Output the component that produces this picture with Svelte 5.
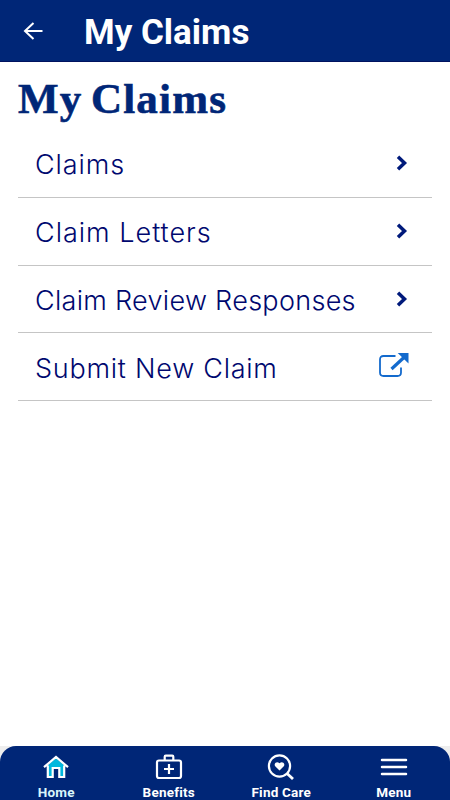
<script>
const links = [
    { label: "Claims", tracking: 0.9 },
    { label: "Claim Letters", tracking: 1 },
    { label: "Claim Review Responses", tracking: 0.3 },
    { label: "Submit New Claim", tracking: 0.75, external: true }
];

const tabs = ["Home", "Benefits", "Find Care", "Menu"];

let activeTab = $state("Home");
</script>

<div class="screen">
    <header>
        <button class="back" aria-label="Back">
            <svg width="20" height="18" viewBox="0 0 20 18">
                <path d="M19.500 9H2M10.500 1L2 9l8.500 8" fill="none" stroke="#fff" stroke-width="2" />
            </svg>
        </button>
        <span class="bar-title">My Claims</span>
    </header>

    <main>
        <h1>My Claims</h1>
        <ul>
            {#each links as link}
            <li>
                <span class="label" style="letter-spacing: {link.tracking}px">{link.label}</span>
                {#if link.external}
                <svg class="external" width="32" height="28" viewBox="0 0 32 28">
                    <path d="M17.500 4H5.500Q2 4 2 7.500V20.500Q2 24 5.500 24H19.500Q23 24 23 20.500V15.500" fill="none" stroke="#136acd" stroke-width="1.800" />
                    <path d="M13.500 17L27 4.500" stroke="#136acd" stroke-width="3.200" />
                    <path d="M19.700 1H30.500V11.500Z" fill="#136acd" />
                </svg>
                {:else}
                <svg class="chevron" width="12" height="16" viewBox="0 0 12 16">
                    <path d="M2 1.800L8.500 8l-6.500 6.200" fill="none" stroke="#001a7b" stroke-width="3.500" />
                </svg>
                {/if}
            </li>
            {/each}
        </ul>
    </main>

    <div class="tab-area">
        <nav>
            {#each tabs as tab}
            <button class="tab" class:active={tab === activeTab} onclick={() => activeTab = tab}>
                <svg width="30" height="26" viewBox="0 0 30 26">
                    {#if tab === "Home"}
                    <path d="M6 12L15 4l9 8v10H6z" fill="#00b8dd" />
                    <path d="M12 23v-8h6v8z" fill="#002677" />
                    <path d="M3 13.200L15 3l12 10.200M6.800 11.500v11.500h4.900v-9h6.600v9h4.900V11.500" fill="none" stroke="#fff" stroke-width="2.200" />
                    {:else if tab === "Benefits"}
                    <rect x="3" y="6.500" width="24" height="17.500" rx="2" fill="none" stroke="#fff" stroke-width="2.200" />
                    <path d="M10.700 6.500V2.700q0-1 1-1h6.600q1 0 1 1V6.500M15 10v10M10 15h10" fill="none" stroke="#fff" stroke-width="2.200" />
                    {:else if tab === "Find Care"}
                    <circle cx="13.500" cy="12" r="10.600" fill="none" stroke="#fff" stroke-width="2.200" />
                    <path d="M20.800 19.200L27 25" stroke="#fff" stroke-width="2.800" />
                    <path d="M13.500 16.500L9.200 12.300C7.300 9.500 10.700 6.800 13.500 9.200C16.300 6.800 19.700 9.500 17.800 12.300Z" fill="#fff" />
                    {:else}
                    <path d="M3 6h24M3 13h24M3 20h24" fill="none" stroke="#fff" stroke-width="2.500" stroke-linecap="round" />
                    {/if}
                </svg>
                <span>{tab}</span>
            </button>
            {/each}
        </nav>
    </div>
</div>

<style>
:global(body) {
    background: #fff;
}

.screen {
    display: flex;
    flex-direction: column;
    height: 100vh;
    overflow: hidden;
    background: #fff;
    font-family: Roboto, "Liberation Sans", sans-serif;
}

button {
    padding: 0;
    border: 0;
    background: none;
    font-family: inherit;
    cursor: pointer;
}

header {
    display: flex;
    align-items: center;
    flex: none;
    box-sizing: border-box;
    height: 62px;
    padding-left: 23px;
    background: #002677;
    border-bottom: 1px solid #00125f;
}

.back {
    display: flex;
    width: 61px;
}

.bar-title {
    padding-top: 5px;
    color: #fff;
    font-size: 35px;
    font-weight: 700;
    line-height: 40px;
}

main {
    flex: 1;
    padding: 0 18px;
}

h1 {
    margin: 12px 0 0;
    height: 56px;
    color: #002677;
    font-family: "Liberation Serif", serif;
    font-size: 43px;
    font-weight: 700;
    line-height: 50px;
    letter-spacing: 1.2px;
    word-spacing: -3.500px;
    white-space: nowrap;
    -webkit-text-stroke: 0.6px #002677;
}

ul {
    margin: 0;
    padding: 0;
    list-style: none;
}

li {
    display: flex;
    align-items: center;
    justify-content: space-between;
    box-sizing: border-box;
    height: 67.800px;
    padding: 0 24px 0 17px;
    border-bottom: 1px solid #c5c5c5;
}

.label {
    padding-top: 4px;
    color: #00086f;
    font-family: Inter, sans-serif;
    font-size: 27px;
    font-weight: 300;
    line-height: 36px;
    white-space: nowrap;
}

.external {
    margin: 0 -2px 1px 0;
}

.tab-area {
    flex: none;
    height: 54px;
    background: #eee;
}

nav {
    display: flex;
    box-sizing: border-box;
    height: 100%;
    padding-top: 8px;
    border-radius: 16px 16px 0 0;
    background: #002677;
}

.tab {
    display: flex;
    flex: 1;
    flex-direction: column;
    align-items: center;
    color: #fff;
    font-size: 13.500px;
    font-weight: 700;
    line-height: 16px;
    letter-spacing: 0.2px;
}

.tab span {
    margin-top: 4px;
    white-space: nowrap;
}

.active {
    color: #d9f6fa;
}
</style>
